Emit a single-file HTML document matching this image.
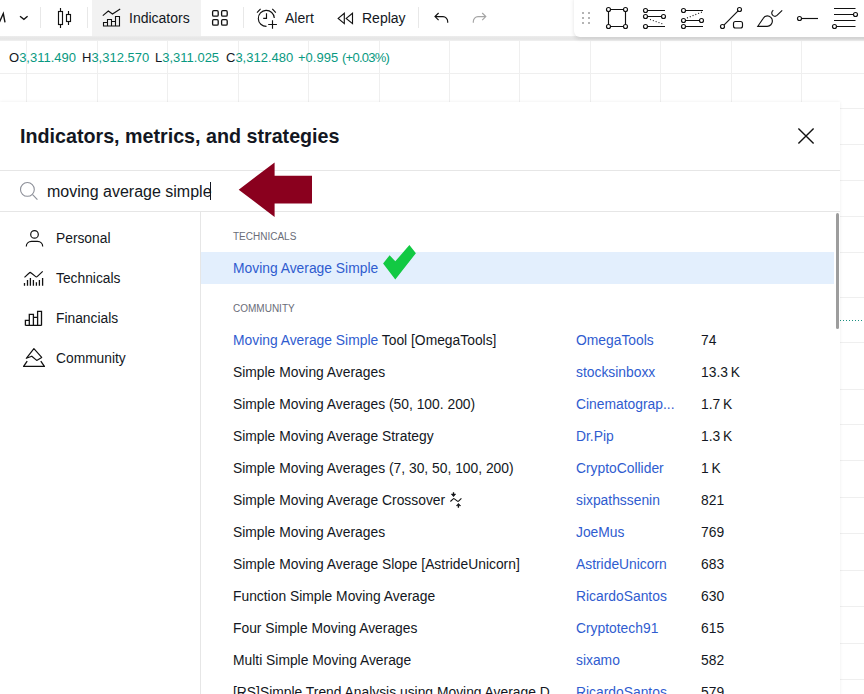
<!DOCTYPE html>
<html><head><meta charset="utf-8">
<style>
*{margin:0;padding:0;box-sizing:border-box}
html,body{width:864px;height:694px;overflow:hidden;background:#fff;font-family:"Liberation Sans",sans-serif;color:#131722}
.a{position:absolute;white-space:nowrap}
.gv{position:absolute;top:41px;bottom:0;width:1px;background:#efefef}
.gh{position:absolute;left:0;right:0;height:1px;background:#efefef}
svg{position:absolute;overflow:visible}
.row{position:absolute;left:233px;font-size:13.85px;line-height:16px}
.au{position:absolute;left:576px;font-size:13.85px;color:#2f5ccf;line-height:16px}
.ct{position:absolute;left:701px;font-size:13.85px;line-height:16px}
.blue{color:#2f5ccf}
</style></head><body>

<!-- toolbar -->
<div class="a" style="left:0;top:0;width:864px;height:37px;background:#fff"></div>
<div class="a" style="left:0;top:36px;width:864px;height:5px;background:linear-gradient(#ededed,#e6e6e6 40%,#e8e8e8 70%,#f1f1f1)"></div>
<div class="a" style="left:92px;top:0;width:109px;height:36px;background:#f2f2f2"></div>

<div class="a" style="left:129px;top:10px;font-size:14px;line-height:16px">Indicators</div>
<div class="a" style="left:285px;top:10px;font-size:14px;line-height:16px">Alert</div>
<div class="a" style="left:362px;top:10px;font-size:14px;line-height:16px">Replay</div>
<div class="a" style="left:40px;top:7px;width:1px;height:21px;background:#e8e8e8"></div>
<div class="a" style="left:87px;top:7px;width:1px;height:21px;background:#e8e8e8"></div>
<div class="a" style="left:243px;top:7px;width:1px;height:21px;background:#e8e8e8"></div>
<div class="a" style="left:418px;top:7px;width:1px;height:21px;background:#e8e8e8"></div>
<!-- drawing toolbar -->
<div class="a" style="left:574px;top:-6px;width:300px;height:43px;background:#fff;border-radius:6px;box-shadow:0 2px 4px rgba(0,0,0,.12)"></div>

<!-- chart grid -->
<div class="gv" style="left:26px"></div>
<div class="gv" style="left:97px"></div>
<div class="gv" style="left:167px"></div>
<div class="gv" style="left:238px"></div>
<div class="gv" style="left:308px"></div>
<div class="gv" style="left:379px"></div>
<div class="gv" style="left:449px"></div>
<div class="gv" style="left:519px"></div>
<div class="gv" style="left:590px"></div>
<div class="gv" style="left:660px"></div>
<div class="gv" style="left:731px"></div>
<div class="gv" style="left:801px"></div>
<div class="gh" style="top:73px"></div>
<div class="gh" style="top:108px"></div>
<div class="gh" style="top:144px"></div>
<div class="gh" style="top:180px"></div>
<div class="gh" style="top:216px"></div>
<div class="gh" style="top:252px"></div>
<div class="gh" style="top:297px"></div>
<div class="gh" style="top:342px"></div>
<div class="gh" style="top:389px"></div>
<div class="gh" style="top:424px"></div>
<div class="gh" style="top:460px"></div>
<div class="gh" style="top:497px"></div>
<div class="gh" style="top:533px"></div>
<div class="gh" style="top:570px"></div>
<div class="gh" style="top:606px"></div>
<div class="gh" style="top:643px"></div>
<div class="gh" style="top:679px"></div>
<div class="a" style="left:840px;top:320px;width:24px;height:1px;background:repeating-linear-gradient(90deg,#1a8f80 0 1px,transparent 1px 3px)"></div>

<!-- OHLC -->
<div class="a" style="left:9px;top:50px;font-size:13px;line-height:16px;color:#089981"><span style="color:#131722">O</span>3,311.490</div>
<div class="a" style="left:82px;top:50px;font-size:13px;line-height:16px;color:#089981"><span style="color:#131722">H</span>3,312.570</div>
<div class="a" style="left:155px;top:50px;font-size:13px;line-height:16px;color:#089981"><span style="color:#131722">L</span>3,311.025</div>
<div class="a" style="left:226px;top:50px;font-size:13px;line-height:16px;color:#089981"><span style="color:#131722">C</span>3,312.480</div>
<div class="a" style="left:298px;top:50px;font-size:13px;line-height:16px;color:#089981">+0.995</div>
<div class="a" style="left:342px;top:50px;font-size:13px;line-height:16px;color:#089981;letter-spacing:-0.75px">(+0.03%)</div>

<!-- dialog -->
<div class="a" style="left:0;top:102px;width:840px;height:600px;background:#fff;box-shadow:0 0 3px rgba(0,0,0,.08)"></div>
<div class="a" style="left:20px;top:125px;font-size:19.7px;font-weight:700;line-height:22px">Indicators, metrics, and strategies</div>
<div class="a" style="left:0;top:170px;width:840px;height:1px;background:#e6e6e6"></div>
<div class="a" style="left:47px;top:183px;font-size:16px;line-height:18px">moving average simple</div>
<div class="a" style="left:210px;top:182px;width:1px;height:18px;background:#131722"></div>
<div class="a" style="left:0;top:211px;width:840px;height:1px;background:#e6e6e6"></div>
<div class="a" style="left:200px;top:212px;width:1px;height:500px;background:#e6e6e6"></div>

<!-- sidebar -->
<div class="a" style="left:56px;top:231px;font-size:13.8px;line-height:16px">Personal</div>
<div class="a" style="left:56px;top:271px;font-size:13.8px;line-height:16px">Technicals</div>
<div class="a" style="left:56px;top:311px;font-size:13.8px;line-height:16px">Financials</div>
<div class="a" style="left:56px;top:351px;font-size:13.8px;line-height:16px">Community</div>

<!-- list -->
<div class="a" style="left:233px;top:232px;font-size:10px;line-height:10px;color:#6a6d78;letter-spacing:0">TECHNICALS</div>
<div class="a" style="left:201px;top:252px;width:633px;height:32px;background:#e3effd"></div>
<div class="row blue" style="top:260px">Moving Average Simple</div>
<div class="a" style="left:233px;top:304px;font-size:10px;line-height:10px;color:#6a6d78">COMMUNITY</div>

<div class="row" style="top:332px"><span class="blue">Moving Average Simple</span> Tool [OmegaTools]</div>
<div class="au" style="top:332px">OmegaTools</div><div class="ct" style="top:332px">74</div>
<div class="row" style="top:364px">Simple Moving Averages</div>
<div class="au" style="top:364px">stocksinboxx</div><div class="ct" style="top:364px">13.3&#8239;K</div>
<div class="row" style="top:396px">Simple Moving Averages (50, 100. 200)</div>
<div class="au" style="top:396px">Cinematograp...</div><div class="ct" style="top:396px">1.7&#8239;K</div>
<div class="row" style="top:428px">Simple Moving Average Strategy</div>
<div class="au" style="top:428px">Dr.Pip</div><div class="ct" style="top:428px">1.3&#8239;K</div>
<div class="row" style="top:460px">Simple Moving Averages (7, 30, 50, 100, 200)</div>
<div class="au" style="top:460px">CryptoCollider</div><div class="ct" style="top:460px">1&#8239;K</div>
<div class="row" style="top:492px">Simple Moving Average Crossover</div>
<div class="au" style="top:492px">sixpathssenin</div><div class="ct" style="top:492px">821</div>
<div class="row" style="top:524px">Simple Moving Averages</div>
<div class="au" style="top:524px">JoeMus</div><div class="ct" style="top:524px">769</div>
<div class="row" style="top:556px">Simple Moving Average Slope [AstrideUnicorn]</div>
<div class="au" style="top:556px">AstrideUnicorn</div><div class="ct" style="top:556px">683</div>
<div class="row" style="top:588px">Function Simple Moving Average</div>
<div class="au" style="top:588px">RicardoSantos</div><div class="ct" style="top:588px">630</div>
<div class="row" style="top:620px">Four Simple Moving Averages</div>
<div class="au" style="top:620px">Cryptotech91</div><div class="ct" style="top:620px">615</div>
<div class="row" style="top:652px">Multi Simple Moving Average</div>
<div class="au" style="top:652px">sixamo</div><div class="ct" style="top:652px">582</div>
<div class="row" style="top:684px">[RS]Simple Trend Analysis using Moving Average D...</div>
<div class="au" style="top:684px">RicardoSantos</div><div class="ct" style="top:684px">579</div>

<!-- scrollbar -->
<div class="a" style="left:836px;top:213px;width:3px;height:116px;border-radius:2px;background:#9d9d9d"></div>


<svg width="864" height="694" style="left:0;top:0" fill="none" stroke="#111" stroke-width="1.15">
 <path d="M-0.5 22 L3.3 13.5 L5 22.3" stroke-width="1.4"/>
 <!-- chevron -->
 <path d="M20 16.3 L23.9 19.3 L27.6 16.3" stroke-width="1.3"/>
 <!-- candles -->
 <rect x="58.5" y="11.5" width="4" height="13"/><path d="M60.5 8v3.5M60.5 24.5v3.5"/>
 <rect x="66.5" y="14.5" width="4" height="7"/><path d="M68.5 11v3.5M68.5 21.5v3.5"/>
 <!-- indicators icon -->
 <path d="M103.5 26.5 V22.5 H107.5 V26.5 M107.5 22.5 V19.5 H111.5 V26.5 M111.5 21.5 H115.5 V26.5 M115.5 26.5 V16.5 H119.5 V26.5 M103 26 H120" stroke-width="1.1"/>
 <path d="M102.8 15.7 L108.3 11 L112.5 14 L120.2 9" stroke-width="1.1"/>
 <!-- grid -->
 <g stroke-width="1.3">
  <rect x="212.6" y="10.7" width="5.6" height="5.4" rx="1.2"/>
  <rect x="221.6" y="10.7" width="5.6" height="5.4" rx="1.2"/>
  <rect x="212.6" y="19.7" width="5.6" height="5.4" rx="1.2"/>
  <rect x="221.6" y="19.7" width="5.6" height="5.4" rx="1.2"/>
 </g>
 <!-- alert -->
 <g transform="translate(252,2)">
  <path d="M14.5 24.4 A8 8 0 1 1 22.3 16"/>
  <path d="M14.5 11.2 V16.4 H11.2"/>
  <path d="M5 10.6 L8.6 6.9 M20.3 6.9 L23.8 10.6"/>
  <path d="M16.2 22.5 H24.9 M20.5 18.2 V26.8"/>
 </g>
 <!-- replay -->
 <g transform="translate(330,2)">
  <path d="M8.2 16.4 L14.3 11.2 V21.6 Z M16.2 16.4 L22.5 11.2 V21.6 Z" stroke-linejoin="miter"/>
 </g>
 <!-- undo / redo -->
 <path d="M438.6 13 L435 16.6 L438.6 20.2 M435 16.6 H443 A4.7 5 0 0 1 447.7 21.6 V22.8"/>
 <path d="M482.2 13 L485.8 16.6 L482.2 20.2 M485.8 16.6 H478 A4.7 5 0 0 0 473.3 21.6 V22.8" stroke="#a5a5a5"/>
 <!-- drag dots -->
 <g fill="#b4b4b4" stroke="none">
  <rect x="582" y="12" width="2" height="2"/><rect x="588" y="12" width="2" height="2"/>
  <rect x="582" y="17" width="2" height="2"/><rect x="588" y="17" width="2" height="2"/>
  <rect x="582" y="22" width="2" height="2"/><rect x="588" y="22" width="2" height="2"/>
 </g>
 <!-- rect tool -->
 <path d="M610.5 9.5 H623.5 M610.5 26.5 H623.5 M608.5 11.5 V24.5 M625.5 11.5 V24.5"/>
 <circle cx="608.5" cy="9.5" r="2"/><circle cx="625.5" cy="9.5" r="2"/><circle cx="608.5" cy="26.5" r="2"/><circle cx="625.5" cy="26.5" r="2"/>
 <!-- channel -->
 <path d="M647.5 10.5 H665 M647.5 16.5 H661.5 M647.5 26.5 H665"/>
 <circle cx="645.5" cy="10.5" r="2"/><circle cx="645.5" cy="16.5" r="2"/><circle cx="663.5" cy="16.5" r="2"/><circle cx="645.5" cy="26.5" r="2"/>
 <path d="M650 19.5 L663 24" stroke-dasharray="1 2"/>
 <!-- channel 2 -->
 <path d="M685.5 10.5 H703 M685.5 20.5 H699.5 M685.5 26.5 H703"/>
 <circle cx="683.5" cy="10.5" r="2"/><circle cx="683.5" cy="20.5" r="2"/><circle cx="701.5" cy="20.5" r="2"/><circle cx="683.5" cy="26.5" r="2"/>
 <path d="M687 18 L702 12" stroke-dasharray="1 2"/>
 <!-- line tool -->
 <path d="M723.9 25.1 L738.1 10.9"/>
 <circle cx="722.5" cy="26.5" r="2"/><circle cx="739.5" cy="9.5" r="2"/>
 <rect x="733.5" y="21.5" width="9" height="6.5" rx="2"/>
 <!-- brush -->
 <path d="M757.8 26.3 H767.2 A5.2 5.2 0 0 0 767.2 15.9 C765.3 15.9 764 16.8 763.3 18.2 Z"/>
 <path d="M773.3 10.3 C771.5 11.5 771.3 13.8 772.5 15 C773.6 16.5 775.5 16.8 777 15.4 L782.2 10.3"/>
 <!-- hline -->
 <circle cx="799.5" cy="18.5" r="2"/><path d="M801.5 18.5 H818"/>
 <!-- fib -->
 <path d="M834 8.5 H855.5 M834 14.5 H853.5 M834 20.5 H855.5 M836.5 26.5 H855.5"/>
 <circle cx="855.5" cy="14.5" r="2"/><circle cx="834.5" cy="26.5" r="2"/>
</svg>


<svg width="864" height="694" style="left:0;top:0" fill="none" stroke="#111" stroke-width="1.2">
 <!-- close -->
 <path d="M798.4 128.4 L813.6 143.4 M813.6 128.4 L798.4 143.4" stroke-width="1.4"/>
 <!-- magnifier -->
 <circle cx="27.4" cy="189.4" r="6.9" stroke="#8c8f98" stroke-width="1.1"/>
 <path d="M32.6 194.6 L37.4 199.6" stroke="#8c8f98" stroke-width="1.1"/>
 <!-- personal -->
 <g transform="translate(18,224)">
  <circle cx="16.5" cy="10.4" r="3.8"/>
  <path d="M8.3 22.6 C8.3 19.5 10.5 17.4 13.5 17.4 H19.5 C22.5 17.4 24.7 19.5 24.7 22.6"/>
 </g>
 <!-- technicals -->
 <g transform="translate(18,264)">
  <path d="M6.5 13.4 L11.2 9 Q12.2 8 13.2 9 L17.4 12.4 Q18.4 13.2 19.4 12.4 L24.7 7.4" stroke-linejoin="round"/>
  <path d="M6.5 21.7V18.9 M9.5 21.7V16.1 M12.4 21.7V14.1 M15.4 21.7V16.1 M18.4 21.7V18.2 M21.4 21.7V16.1 M24.6 21.7V14.1" stroke-width="1.3"/>
 </g>
 <!-- financials -->
 <g transform="translate(18,304)">
  <path d="M7.4 21.4 V16.4 H11.3 V21.4 M11.3 16.4 V10.4 H15.4 V21.4 M15.4 13.4 H19.6 V21.4 M19.6 21.4 V7.4 H23.5 V21.4 M7.4 21.4 H23.5" stroke-width="1.3"/>
 </g>
 <!-- community -->
 <g transform="translate(18,344)">
  <path d="M15.9 4.6 L23.7 13.4 L18.7 16.4 L13.8 12.2 L8.3 14.3 Z" stroke-linejoin="round"/>
  <path d="M9.2 17.1 L5.6 22.4 H26.4 L22.8 17.1" stroke-width="1.3" stroke-linejoin="round"/>
 </g>
 <!-- sparkle crossover -->
 <g transform="translate(440,484)">
  <path d="M13.5 8.3 V10.5 M18.4 21.4 V23.7" stroke-width="1.3"/>
  <path d="M11.3 10.1 H15.7 L13.5 12.7 Z M16.4 21.7 H20.7 L18.4 19.4 Z" fill="#131722" stroke-width="0.6"/>
  <path d="M10.4 17.5 L13.2 14.9 Q13.8 14.3 14.4 14.9 L17.4 17.1 Q18 17.6 18.6 17.1 L21.4 14.3" stroke-width="1.1"/>
 </g>
 <!-- arrow -->
 <path d="M238.7 189.7 L274.6 162.5 L274.6 175.8 L312 175.8 L312 203.6 L274.6 203.6 L274.6 217 Z" fill="#8a001e" stroke="none"/>
 <!-- checkmark -->
 <path d="M383.1 263.4 L389.6 255.3 L395.3 261.3 L409.4 245.1 L415.9 253.2 L395.3 279.6 Z" fill="#12c943" stroke="none"/>
</svg>

</body></html>
